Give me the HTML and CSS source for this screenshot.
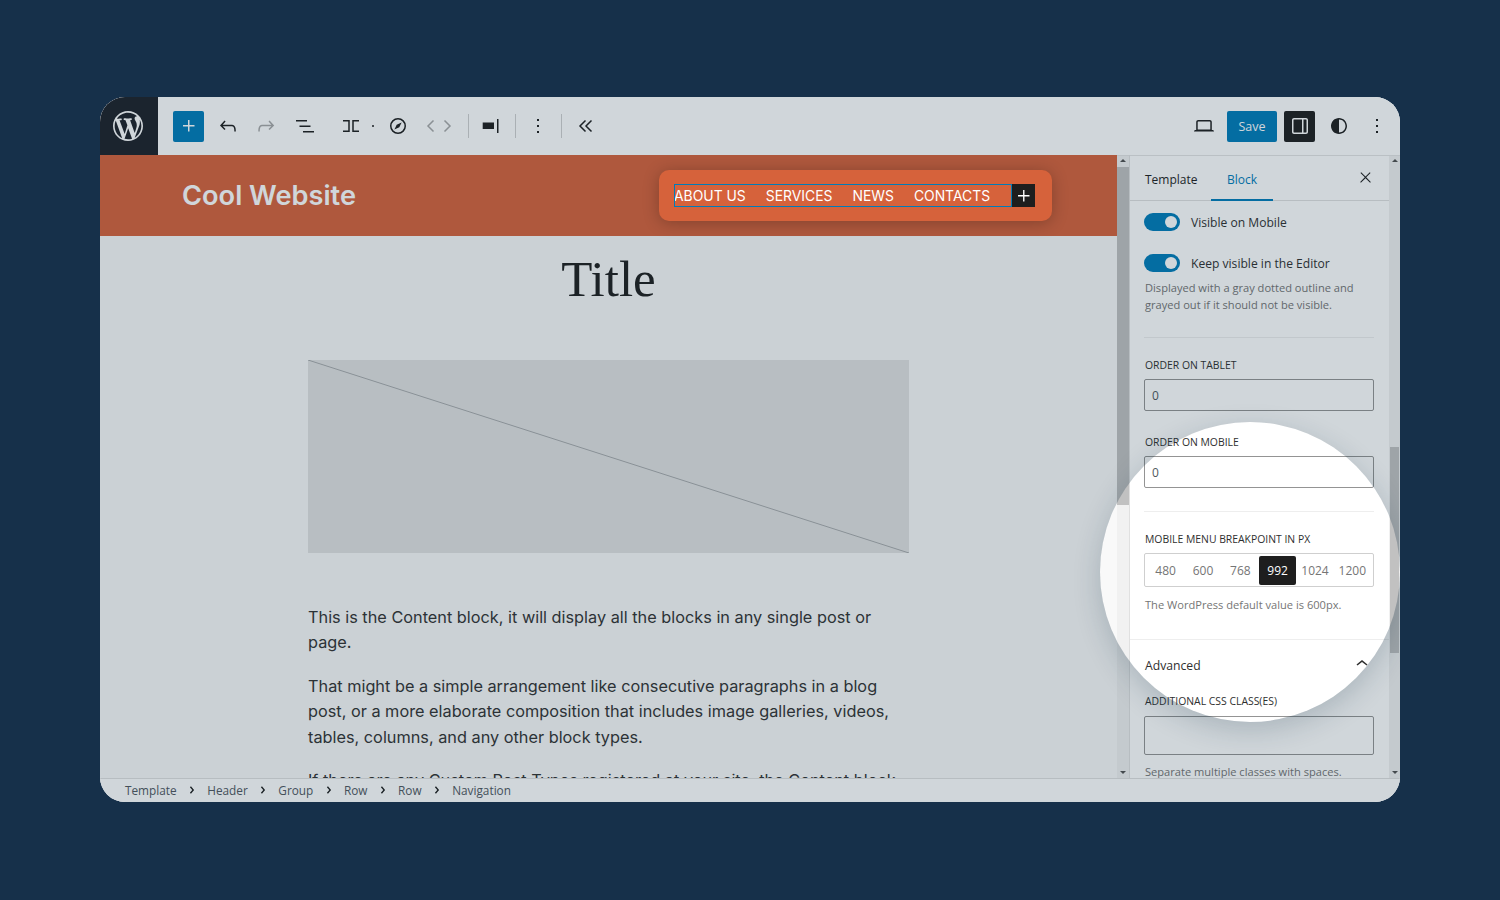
FILE: index.html
```html
<!DOCTYPE html>
<html lang="en">
<head>
    <meta charset="UTF-8">
    <title>Site editor</title>
    <link rel="stylesheet" href="styles.css">
</head>
<body>
<div class="window">
    <header class="toolbar">
        <div class="wp-logo">
            <svg width="30" height="30" viewBox="0 0 20 20"><path fill="#fff" d="M20 10c0-5.51-4.49-10-10-10C4.48 0 0 4.49 0 10c0 5.52 4.48 10 10 10 5.51 0 10-4.48 10-10zM7.78 15.37L4.37 6.22c.55-.02 1.17-.08 1.17-.08.5-.06.44-1.13-.06-1.11 0 0-1.45.11-2.37.11-.18 0-.37 0-.58-.01C4.12 2.69 6.87 1.11 10 1.11c2.33 0 4.45.87 6.05 2.34-.68-.11-1.65.39-1.65 1.58 0 .74.45 1.36.9 2.1.35.61.55 1.36.55 2.46 0 1.49-1.4 5-1.4 5l-3.03-8.37c.54-.02.82-.17.82-.17.5-.05.44-1.25-.06-1.22 0 0-1.44.12-2.38.12-.87 0-2.33-.12-2.33-.12-.5-.03-.56 1.2-.06 1.22l.92.08 1.26 3.41zM17.41 10c.24-.64.74-1.87.43-4.25.7 1.29 1.05 2.71 1.05 4.25 0 3.29-1.73 6.24-4.4 7.78.97-2.59 1.94-5.2 2.92-7.78zM6.1 18.09C3.12 16.65 1.11 13.53 1.11 10c0-1.3.23-2.48.72-3.59C3.25 10.3 4.67 14.2 6.1 18.09zm4.03-6.63l2.58 6.98c-.86.29-1.76.45-2.71.45-.79 0-1.57-.11-2.29-.33.81-2.38 1.62-4.74 2.42-7.1z"/></svg>
        </div>
        <div class="tools">
            <span class="tool tool-primary">
                <svg width="24" height="24" viewBox="0 0 24 24"><path fill="#fff" d="M11 12.5V17.5H12.5V12.5H17.5V11H12.5V6H11V11H6V12.5H11Z"/></svg>
            </span>
            <span class="tool tool-undo">
                <svg width="24" height="24" viewBox="0 0 24 24"><path d="M18.3 11.7c-.6-.6-1.4-.9-2.3-.9H6.7l2.9-3.3-1.1-1-4.5 5L8.5 16l1-1-2.7-2.7H16c.5 0 .9.2 1.3.5 1 1 1 3.4 1 4.5v.3h1.5v-.2c0-1.5 0-4.3-1.5-5.7z"/></svg>
            </span>
            <span class="tool tool-redo muted">
                <svg width="24" height="24" viewBox="0 0 24 24"><path d="M15.6 6.5l-1.1 1 2.9 3.3H8c-.9 0-1.7.3-2.3.9-1.4 1.5-1.4 4.2-1.4 5.6v.2h1.5v-.3c0-1.1 0-3.5 1-4.5.3-.3.7-.5 1.3-.5h9.2L14.5 15l1.1 1.1 4.6-4.6-4.6-5z"/></svg>
            </span>
            <span class="tool tool-list">
                <svg width="24" height="24" viewBox="0 0 24 24"><path d="M3 6h11v1.5H3V6Zm3.5 5.5h11V13h-11v-1.5ZM21 17H10v1.5h11V17Z"/></svg>
            </span>
            <span class="tool tool-mode">
                <svg width="24" height="24" viewBox="0 0 24 24"><path class="line" d="M4 6.75h6v10.500H4M20 6.75h-6v10.500h6"/></svg>
            </span>
            <span class="dot"></span>
            <span class="tool tool-compass">
                <svg width="24" height="24" viewBox="0 0 24 24"><circle class="line" cx="12" cy="12" r="7.25"/><path d="M15.6 8.4l-2.3 4.9-4.9 2.3 2.3-4.9z"/></svg>
            </span>
            <span class="tool tool-arrows muted">
                <svg width="30" height="24" viewBox="0 0 30 24"><path class="line" d="M9.5 6.5L4 12l5.5 5.5M20.5 6.5L26 12l-5.5 5.5"/></svg>
            </span>
            <span class="sep sep-first"></span>
            <span class="tool tool-align">
                <svg width="24" height="24" viewBox="0 0 24 24"><path d="M3.7 8.6h11.3v6.4H3.7zM18 5h1.5v14H18z"/></svg>
            </span>
            <span class="sep sep-second"></span>
            <span class="tool tool-more">
                <svg width="24" height="24" viewBox="0 0 24 24"><path d="M13 19h-2v-2h2v2zm0-6h-2v-2h2v2zm0-6h-2V5h2v2z"/></svg>
            </span>
            <span class="sep sep-third"></span>
            <span class="tool tool-collapse">
                <svg width="24" height="24" viewBox="0 0 24 24"><path class="line" d="M11.5 6.5L6 12l5.5 5.5M17.5 6.5L12 12l5.5 5.5"/></svg>
            </span>
        </div>
        <div class="tools-right">
            <span class="tool tool-device">
                <svg width="24" height="24" viewBox="0 0 24 24"><path d="M20.5 16h-.7V8c0-1.1-.9-2-2-2H6.2c-1.1 0-2 .9-2 2v8h-.7c-.8 0-1.5.7-1.5 1.5h20c0-.8-.7-1.5-1.5-1.5zM5.7 8c0-.3.2-.5.5-.5h11.600c.3 0 .5.2.5.5v7.600H5.700V8z"/></svg>
            </span>
            <span class="save-btn">Save</span>
            <span class="tool tool-drawer">
                <svg width="24" height="24" viewBox="0 0 24 24"><path fill="#fff" d="M18 4H6c-1.1 0-2 .9-2 2v12c0 1.1.9 2 2 2h12c1.1 0 2-.9 2-2V6c0-1.1-.9-2-2-2zm-4 14.5H6c-.3 0-.5-.2-.5-.5V6c0-.3.2-.5.5-.5h8v13zm4.500-.5c0 .3-.2.5-.5.5h-2.500v-13H18c.3 0 .5.2.5.5v12z"/></svg>
            </span>
            <span class="tool tool-styles">
                <svg width="24" height="24" viewBox="0 0 24 24"><path fill-rule="evenodd" d="M12 4c-4.4 0-8 3.6-8 8s3.6 8 8 8 8-3.6 8-8-3.6-8-8-8zm0 14.5v-13c3.6 0 6.5 2.9 6.5 6.5s-2.9 6.5-6.5 6.5z"/></svg>
            </span>
            <span class="tool tool-options">
                <svg width="24" height="24" viewBox="0 0 24 24"><path d="M13 19h-2v-2h2v2zm0-6h-2v-2h2v2zm0-6h-2V5h2v2z"/></svg>
            </span>
        </div>
    </header>

    <div class="workspace">
        <main class="canvas">
            <div class="site-header">
                <div class="site-title">Cool Website</div>
                <nav class="nav-pill">
                    <ul class="nav-list">
                        <li>ABOUT US</li>
                        <li>SERVICES</li>
                        <li>NEWS</li>
                        <li>CONTACTS</li>
                    </ul>
                    <span class="nav-add">
                        <svg width="22" height="22" viewBox="0 0 24 24"><path fill="#fff" d="M11 12.5V18H12.5V12.5H18V11H12.5V5.5H11V11H5.5V12.5H11Z"/></svg>
                    </span>
                </nav>
            </div>
            <h1 class="post-title">Title</h1>
            <div class="placeholder">
                <svg width="100%" height="100%" viewBox="0 0 601 193" preserveAspectRatio="none"><line x1="0" y1="0" x2="601" y2="193" stroke="#a7a9ab" stroke-width="1"/></svg>
            </div>
            <div class="post-content">
                <p>This is the Content block, it will display all the blocks in any single post or page.</p>
                <p>That might be a simple arrangement like consecutive paragraphs in a blog post, or a more elaborate composition that includes image galleries, videos, tables, columns, and any other block types.</p>
                <p>If there are any Custom Post Types registered at your site, the Content block can display the contents of those entries as well.</p>
            </div>
        </main>

        <div class="scroll scroll-canvas">
            <span class="arrow-up"></span>
            <span class="thumb"></span>
            <span class="arrow-down"></span>
        </div>

        <aside class="sidebar">
            <div class="tabs">
                <span class="tab tab-template">Template</span>
                <span class="tab tab-active">Block</span>
                <svg class="tab-close" width="17" height="17" viewBox="0 0 24 24"><path d="M13 11.8l6.1-6.3-1-1-6.1 6.2-6.1-6.2-1 1 6.1 6.3-6.5 6.7 1 1 6.5-6.6 6.5 6.6 1-1z"/></svg>
            </div>
            <section class="panel panel-first">
                <div class="toggle-row">
                    <span class="toggle"></span>
                    <span class="toggle-label">Visible on Mobile</span>
                </div>
                <div class="toggle-row toggle-row-next">
                    <span class="toggle"></span>
                    <span class="toggle-label">Keep visible in the Editor</span>
                </div>
                <p class="help help-toggle">Displayed with a gray dotted outline and grayed out if it should not be visible.</p>
                <hr class="divider">
                <label class="field-label">Order on Tablet</label>
                <div class="input">0</div>
                <label class="field-label field-label-next">Order on Mobile</label>
                <div class="input">0</div>
                <hr class="divider">
                <label class="field-label">Mobile menu breakpoint in px</label>
                <div class="segments">
                    <span>480</span>
                    <span>600</span>
                    <span>768</span>
                    <span class="selected">992</span>
                    <span>1024</span>
                    <span>1200</span>
                </div>
                <p class="help help-segments">The WordPress default value is 600px.</p>
            </section>
            <section class="panel">
                <div class="panel-title">
                    <span>Advanced</span>
                    <svg width="24" height="24" viewBox="0 0 24 24"><path d="M6.5 12.4L12 8l5.5 4.4-.9 1.2L12 10l-4.5 3.6-1-1.2z"/></svg>
                </div>
                <label class="field-label">Additional CSS class(es)</label>
                <div class="input input-tall"></div>
                <p class="help help-classes">Separate multiple classes with spaces.</p>
            </section>
        </aside>

        <div class="scroll scroll-side">
            <span class="arrow-up"></span>
            <span class="thumb"></span>
            <span class="arrow-down"></span>
        </div>
    </div>

    <footer class="breadcrumbs">
        <span>Template</span>
        <svg width="22" height="22" viewBox="0 0 24 24"><path d="M10.86 8.04L14.28 12.03 10.86 16.02 9.72 15.04 12.3 12.03 9.72 9.02z"/></svg>
        <span>Header</span>
        <svg width="22" height="22" viewBox="0 0 24 24"><path d="M10.86 8.04L14.28 12.03 10.86 16.02 9.72 15.04 12.3 12.03 9.72 9.02z"/></svg>
        <span>Group</span>
        <svg width="22" height="22" viewBox="0 0 24 24"><path d="M10.86 8.04L14.28 12.03 10.86 16.02 9.72 15.04 12.3 12.03 9.72 9.02z"/></svg>
        <span>Row</span>
        <svg width="22" height="22" viewBox="0 0 24 24"><path d="M10.86 8.04L14.28 12.03 10.86 16.02 9.72 15.04 12.3 12.03 9.72 9.02z"/></svg>
        <span>Row</span>
        <svg width="22" height="22" viewBox="0 0 24 24"><path d="M10.86 8.04L14.28 12.03 10.86 16.02 9.72 15.04 12.3 12.03 9.72 9.02z"/></svg>
        <span>Navigation</span>
    </footer>

    <!-- dims everything except the circle -->
    <div class="spotlight"></div>
</div>
</body>
</html>
```

FILE: styles.css
```css
* {
    margin: 0;
    padding: 0;
    box-sizing: border-box;
}
body {
    background: #16304a;
    font-family: "Open Sans", "Noto Sans", sans-serif;
    color: #1e1e1e;
}
li {
    list-style: none;
}
svg {
    display: block;
    fill: currentColor;
}
.line {
    fill: none;
    stroke: currentColor;
    stroke-width: 1.5;
}

.window {
    position: relative;
    isolation: isolate;
    width: 1300px;
    height: 705px;
    margin: 97px 0 0 100px;
    display: flex;
    flex-direction: column;
    background: #fff;
    border-radius: 25px;
    overflow: hidden;
}

/* toolbar */
.toolbar {
    height: 58px;
    flex: none;
    display: flex;
    align-items: center;
    background: #fff;
}
.wp-logo {
    width: 58px;
    height: 58px;
    padding-right: 2px;
    display: flex;
    align-items: center;
    justify-content: center;
    background: #1d2129;
}
.tools {
    display: flex;
    align-items: center;
    margin: 1px 0 0 15px;
    flex: 1;
}
.tools-right {
    display: flex;
    align-items: center;
    margin: 1px 11px 0 0;
}
.tool {
    display: flex;
    align-items: center;
    justify-content: center;
    height: 31px;
    width: 24px;
    padding-bottom: 1px;
}
.muted {
    color: #a8a8a8;
}
.tool-primary {
    width: 31px;
    background: #007cba;
    border-radius: 2px;
}
.tool-undo { margin-left: 12px; }
.tool-redo { margin-left: 14px; }
.tool-list { margin-left: 15px; }
.tool-mode { margin-left: 22px; }
.dot {
    width: 2px;
    height: 2px;
    margin: -1px 0 0 9px;
    border-radius: 50%;
    background: #1e1e1e;
}
.tool-compass { margin-left: 12px; }
.tool-arrows { width: 30px; margin-left: 14px; }
.sep {
    width: 1px;
    height: 24px;
    margin-top: -1px;
    background: #d0d0d0;
}
.sep-first { margin-left: 14px; }
.tool-align { margin-left: 10px; }
.sep-second { margin-left: 12px; }
.tool-more { margin-left: 10px; }
.sep-third { margin-left: 11px; }
.tool-collapse { margin-left: 12px; }
.save-btn {
    width: 50px;
    height: 31px;
    margin: 0 7px 0 11px;
    display: flex;
    align-items: center;
    justify-content: center;
    background: #007cba;
    color: #fff;
    border-radius: 2px;
    font-size: 12.5px;
}
.tool-drawer {
    width: 31px;
    background: #1e1e1e;
    border-radius: 2px;
}
.tool-styles { margin-left: 12px; }
.tool-options { margin-left: 14px; }

/* main row */
.workspace {
    flex: 1;
    min-height: 0;
    display: flex;
}
.canvas {
    width: 1017px;
    flex: none;
    overflow: hidden;
    background: #f9f9f9;
}
.site-header {
    height: 81px;
    display: flex;
    align-items: center;
    justify-content: space-between;
    padding: 0 65px 0 82px;
    background: #d6623b;
}
.site-title {
    font-family: Inter, sans-serif;
    font-size: 27.2px;
    font-weight: 600;
    color: #fff;
}
/* stays lit above the dimming layer */
.nav-pill {
    position: relative;
    z-index: 3;
    width: 393px;
    height: 51px;
    padding: 0 17px 0 15px;
    display: flex;
    align-items: center;
    background: #d6623b;
    border-radius: 10px;
    box-shadow: 0 2px 16px rgba(0, 0, 0, .25);
    font-family: Inter, sans-serif;
    font-size: 13.9px;
    color: #fff;
}
.nav-list {
    flex: 1;
    height: 23px;
    display: flex;
    align-items: center;
    gap: 20px;
    outline: 1px solid #007cba;
    outline-offset: -1px;
}
.nav-add {
    width: 23px;
    height: 23px;
    display: flex;
    align-items: center;
    justify-content: center;
    background: #1e1e1e;
}
.post-title {
    margin-top: 13px;
    font-family: "Liberation Serif", serif;
    font-size: 51px;
    font-weight: 400;
    line-height: 61px;
    text-align: center;
}
.placeholder {
    width: 601px;
    height: 193px;
    margin: 50px 0 0 208px;
    background: #e2e2e2;
}
.post-content {
    width: 601px;
    margin: 51.5px 0 0 208px;
    font-family: Inter, sans-serif;
    font-size: 16.3px;
    line-height: 25.5px;
    color: #333;
}
.post-content p {
    margin-bottom: 18px;
}

/* scrollbars */
.scroll {
    flex: none;
    display: flex;
    flex-direction: column;
    align-items: center;
    background: #f1f1f1;
    box-shadow: inset 0 1px #e4e4e4;
}
.scroll-canvas { width: 12px; }
.scroll-side { width: 11px; }
.thumb {
    width: 100%;
    background: #c1c1c1;
}
.scroll-canvas .thumb {
    height: 338px;
    margin-top: 5px;
}
.scroll-side .thumb {
    width: 9px;
    height: 206px;
    margin-top: 285px;
}
.arrow-up,
.arrow-down {
    width: 0;
    height: 0;
    border-left: 3px solid transparent;
    border-right: 3px solid transparent;
}
.arrow-up {
    margin-top: 4px;
    border-bottom: 3px solid #505050;
}
.arrow-down {
    margin-top: auto;
    margin-bottom: 4px;
    border-top: 3px solid #505050;
}

/* sidebar */
.sidebar {
    width: 260px;
    flex: none;
    overflow: hidden;
    background: #fff;
    border-left: 1px solid #e0e0e0;
    box-shadow: inset 0 1px #e4e4e4;
    font-size: 12.1px;
    color: #2f2f2f;
}
.tabs {
    height: 46px;
    display: flex;
    padding-left: 15px;
    border-bottom: 1px solid #e0e0e0;
    font-size: 12px;
    font-weight: 500;
    color: #1e1e1e;
}
.tab {
    padding-top: 16px;
    height: 46px;
}
.tab-template {
    width: 66px;
}
.tab-active {
    width: 62px;
    text-align: center;
    color: #007cba;
    border-bottom: 2px solid #007cba;
}
.tab-close {
    margin: 14px 15px 0 auto;
}
.panel {
    padding: 0 15px 0 14px;
    border-bottom: 1px solid #eee;
}
.panel-first {
    padding-top: 12px;
    padding-bottom: 26px;
}
.toggle-row {
    display: flex;
    align-items: center;
    gap: 11px;
    height: 18px;
}
.toggle-row-next {
    margin-top: 23px;
}
.toggle {
    position: relative;
    width: 36px;
    height: 18px;
    background: #007cba;
    border-radius: 9px;
}
.toggle::after {
    content: "";
    position: absolute;
    top: 3px;
    right: 3px;
    width: 12px;
    height: 12px;
    border-radius: 50%;
    background: #fff;
}
.help {
    padding-left: 1px;
    font-size: 11.1px;
    line-height: 17px;
    color: #757575;
}
.help-toggle {
    margin: 7px 0 24px;
}
.help-segments {
    margin-top: 9px;
}
.help-classes {
    margin-top: 8px;
}
.divider {
    border: 0;
    border-top: 1px solid #eee;
}
.field-label {
    display: block;
    margin-top: 19px;
    padding-left: 1px;
    font-size: 10.4px;
    line-height: 16px;
    text-transform: uppercase;
    font-weight: 500;
}
.field-label-next {
    margin-top: 23px;
}
.input {
    height: 32px;
    margin-top: 6px;
    padding: 1px 7px 0;
    display: flex;
    align-items: center;
    border: 1px solid #949494;
    border-radius: 2px;
    font-size: 12px;
    color: #50575e;
}
.input-tall {
    height: 39px;
    margin-top: 7px;
}
.input + .divider {
    margin-top: 23px;
}
.segments {
    height: 34px;
    margin-top: 6px;
    padding: 1.5px 2px;
    display: grid;
    grid-template-columns: repeat(6, 1fr);
    border: 1px solid #cfcfcf;
    border-radius: 2px;
    font-size: 12px;
    color: #757575;
}
.segments span {
    padding-top: 1px;
    display: flex;
    align-items: center;
    justify-content: center;
    border-radius: 2px;
}
.segments .selected {
    background: #1e1e1e;
    color: #fff;
}
.panel-title {
    display: flex;
    align-items: center;
    justify-content: space-between;
    height: 51px;
    padding-left: 1px;
    margin-bottom: -17px;
    font-size: 12.2px;
    font-weight: 500;
}
.panel-title svg {
    margin-top: -3px;
}

/* bottom bar */
.breadcrumbs {
    height: 24px;
    flex: none;
    display: flex;
    align-items: center;
    gap: 4.3px;
    padding: 0 0 1px 25px;
    background: #fff;
    border-top: 1px solid #e0e0e0;
    font-size: 11.8px;
    color: #50575e;
}
.breadcrumbs svg {
    color: #1e1e1e;
}

/* dimming with a hole */
.spotlight {
    position: absolute;
    z-index: 2;
    left: 1000px;
    top: 325px;
    width: 300px;
    height: 300px;
    border-radius: 50%;
    box-shadow: 0 8px 28px rgba(22, 48, 72, .2), 0 0 0 1300px rgba(22, 48, 72, .2);
}
```
